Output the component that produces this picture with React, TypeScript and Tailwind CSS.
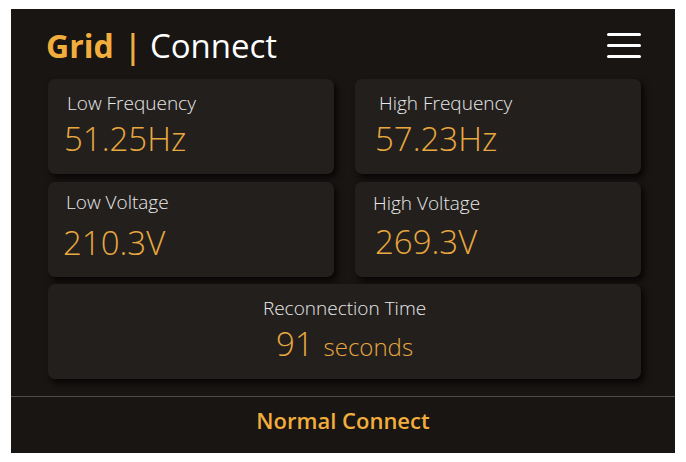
import React from "react"

type Reading = {
  label: string
  value: string
  top: string
  labelPad: string
  valueGap: string
  valuePad: string
}

const readings: Reading[] = [
  { label: "Low Frequency", value: "51.25Hz", top: "pt-[11px]", labelPad: "pl-[19px]", valueGap: "mt-[3px]", valuePad: "pl-[16px]" },
  { label: "High Frequency", value: "57.23Hz", top: "pt-[11px]", labelPad: "pl-[24px]", valueGap: "mt-[3px]", valuePad: "pl-[20px]" },
  { label: "Low Voltage", value: "210.3V", top: "pt-[7px]", labelPad: "pl-[18px]", valueGap: "mt-[8px]", valuePad: "pl-[15px]" },
  { label: "High Voltage", value: "269.3V", top: "pt-[8px]", labelPad: "pl-[18px]", valueGap: "mt-[6px]", valuePad: "pl-[20px]" },
]

const card = "rounded-[7px] bg-[#221f1d] shadow-[3px_4px_6px_rgba(0,0,0,0.75)] h-[95px]"

function ReadingCard({ r }: { r: Reading }) {
  return (
    <div className={`${card} ${r.top}`}>
      <div className={`${r.labelPad} text-[19px] font-light text-[#e8e8e8] leading-[26px]`}>{r.label}</div>
      <div className={`${r.valuePad} ${r.valueGap} text-[33px] font-light text-[#e9a83f] leading-[40px]`}>{r.value}</div>
    </div>
  )
}

export default function App() {
  return (
    <div className="bg-white w-[686px] h-[462px] pt-[9px] pl-[11px]" style={{ fontFamily: '"Open Sans", "Liberation Sans", sans-serif' }}>
      <div className="w-[664px] h-[444px] bg-[#181513] flex flex-col">
        {/* Header */}
        <div className="h-[70px] flex items-center justify-between pl-[35px] pr-[34px]">
          <h1 className="text-[33px] leading-none mt-[2px] flex items-baseline">
            <span className="font-bold text-[#f2ae3c] text-[32px]">Grid</span>
            <span className="text-[#f2ae3c] font-semibold ml-[10px] mr-[8px]">|</span>
            <span className="text-white font-normal">Connect</span>
          </h1>
          <div className="flex flex-col gap-[8px] w-[34px] mt-[2px]">
            <span className="block h-[3px] bg-white rounded-full" />
            <span className="block h-[3px] bg-white rounded-full" />
            <span className="block h-[3px] bg-white rounded-full" />
          </div>
        </div>

        {/* Readings */}
        <div className="pl-[37px] pr-[34px]">
          <div className="grid grid-cols-2 gap-x-[21px] gap-y-[8px]">
            {readings.map((r) => (
              <ReadingCard key={r.label} r={r} />
            ))}
            <div className={`${card} col-span-2 mt-[-1px] pt-[11px] flex flex-col items-center`}>
              <div className="text-[19px] font-light text-[#e8e8e8] leading-[26px]">Reconnection Time</div>
              <div className="flex items-baseline text-[#e9a83f] font-light mt-[3px]">
                <span className="text-[33px] leading-[40px]">91</span>
                <span className="text-[24px] leading-[40px] ml-[10px]">seconds</span>
              </div>
            </div>
          </div>
        </div>

        {/* Footer */}
        <div className="mt-[17px] border-t border-[#524c48] flex-1 flex items-center justify-center">
          <span className="text-[22px] font-semibold text-[#f2ae3c] pb-[10px]">Normal Connect</span>
        </div>
      </div>
    </div>
  )
}
